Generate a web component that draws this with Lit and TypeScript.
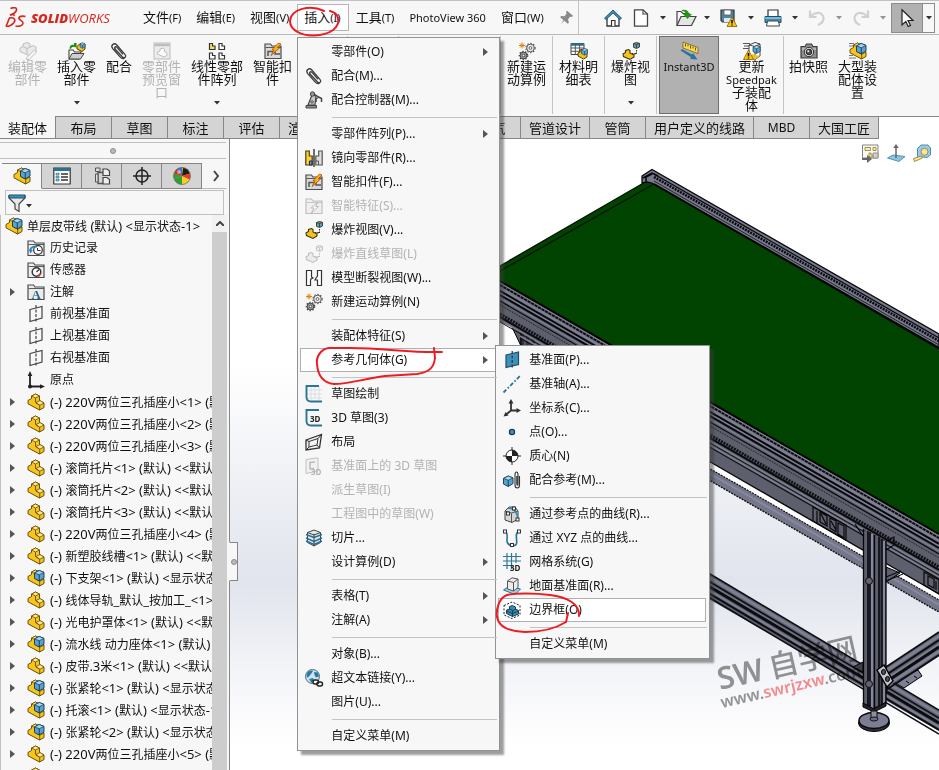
import { LitElement, html, svg, css, nothing, TemplateResult, SVGTemplateResult } from "lit";
import { customElement, state } from "lit/decorators.js";
import { classMap } from "lit/directives/class-map.js";

/* ---------- icon artwork, all on an 18 x 18 grid ---------- */

const partShape = svg`
  <path d="M1 7.5 4.5 5.5V3L8.5 1l4 2v4.5L17 10v4.5L12.500 17 1 10.800Z" fill="#f7c61c" stroke="#6a4c08"/>
  <path d="M4.500 3 8.500 1l4 2-4 2ZM9 9.500l4-2 4 2.500-4.300 2.300Z" fill="#fde58a" stroke="#6a4c08" stroke-width=".8"/>
  <path d="M8.500 5v4.500l4.200 2.800V17" fill="none" stroke="#6a4c08" stroke-width=".9"/>`;

const cube = (x: number, y: number, s: number) => svg`
  <g transform="translate(${x} ${y}) scale(${s})">
    <path d="M0 2.500 5 0l5 2V8L5 11 0 8.500Z" fill="#5aa3cd" stroke="#143c55"/>
    <path d="M0 2.500 5 0l5 2-5 2.500Z" fill="#a9d6ee" stroke="#143c55" stroke-width=".8"/>
    <path d="M5 4.500V11" stroke="#143c55"/>
  </g>`;

const asmShape = svg`${partShape}${cube(7.5, 1.5, 0.95)}`;

const clipShape = svg`<g fill="none" stroke="#3c3c3c" stroke-width="1.300" stroke-linecap="round">
  <path d="M5 7 12.500 15c2 1.800 4.300-.4 2.600-2.400L6.800 3C4 .2.200 3.300 2.700 6.600l7.600 8.500c1.300 1.400 3 1.600 4 1"/>
  <path d="M5 7C3.800 5.400 5.600 3.900 7 5.400l5.600 6.400"/></g>`;

const folderShape = (tone: string, fill: string) => svg`
  <path d="M1 16.500V2h5.500l1.500 2h9v12.500Z" fill="${fill}" stroke="${tone}" stroke-width="1.200"/>
  <path d="M1.500 5.500h15.500" stroke="${tone}" stroke-width=".9"/>`;

const planeOutline = svg`<path d="M3 4.500 15 1.500V13L3 16.500Z" fill="none" stroke="#444" stroke-width="1.200"/>
  <path d="M9 0v17.500" stroke="#444" stroke-width="1.200" stroke-dasharray="3 1.500"/>`;

const gear = (x: number, y: number, r: number, c: string, f: string) => svg`
  <circle cx=${x} cy=${y} r=${r + 0.8} fill="none" stroke=${c} stroke-width="1.200" stroke-dasharray="1.400 1.600"/>
  <circle cx=${x} cy=${y} r=${r} fill=${f} stroke=${c}/>
  <circle cx=${x} cy=${y} r=${r * 0.38} fill="#f7f7f7" stroke=${c} stroke-width=".9"/>`;

const explodeShape = (a: string, b: string, c: string) => svg`
  <path d="M1 12 3.500 10.500V8.500l3-1 1.500 1V11l4 2v2l-4 2.500-6.500-3Z" fill=${a} stroke=${c} stroke-width="1.100"/>
  <path d="M11.500 1.500l3-1 3 .8V5l-3 1.500-3-1.200Z" fill=${b} stroke=${c} stroke-width=".9"/>
  <path d="M11.500 1.500l3 1 3-1M14.500 2.500v3.500" stroke=${c} stroke-width=".8" fill="none"/>
  <path d="M14.500 8v4H11M10 11.500h4.500" stroke=${c} stroke-dasharray="1.500 1" fill="none"/>`;

const warn = svg`<path d="M5.500 8 10.500 17.500H.5Z" fill="#fbc50f" stroke="#8a5c00" stroke-width=".8"/><path d="M5.500 11v3.500M5.500 15.500v1" stroke="#111" stroke-width="1.600"/>`;
const speed = svg`<path d="M0 1.500h7M1 4h6M0 6.500h6" stroke="#555" stroke-width="1"/>`;

const ICONS: Record<string, SVGTemplateResult> = {
  part: partShape,
  asm: asmShape,
  clip: clipShape,
  editPart: svg`<g fill="#e9e9e9" stroke="#bdbdbd"><path d="M1 6 4 4.500V2l4-1.500L11 2v3l3-1.500 3 1.500v5l-6 4L1 9.500Z"/><path d="M4 4.500 8 6.500l3-1.500M8 6.500V12" fill="none"/><path d="M15.500 8 17.500 10 10 17.500 7.500 17.500 8 15.500Z" fill="#fafafa"/></g>`,
  insertPart: svg`<path d="M1 17V8h4l1.500 2H13l-2 7Z" fill="#fafafa" stroke="#444" stroke-width="1.100"/><path d="M1 17l3-5.500h12L12.500 17Z" fill="#cfcfcf" stroke="#444"/>
    <path d="M1.500 6.500C1.500 3 4 2 6 3V1l-.5 0h3v4.500L6.500 5C4.500 4.500 3.500 5 3 7Z" fill="#17920f"/>
    <path d="M9 4.500l3-3 5 .5v5L14 9.500 9 7Z" fill="#f3c21d" stroke="#4d3b0c"/>${cube(12, 0.8, 0.5)}`,
  preview: svg`<rect x="1" y="1" width="16" height="16" fill="#ececec" stroke="#bdbdbd"/><path d="M1.500 3h15" stroke="#bdbdbd" stroke-width="2.500"/><path d="M4.500 10 7 9V7l3-1 1.500 1v2.500L14 11v2.500L11 15l-6.500-3Z" fill="#fafafa" stroke="#bdbdbd"/>`,
  pattern: svg`<g stroke="#333" stroke-width="1.200"><path d="M1.500 1.500h3v2.500h2.500V7.500h-5.500Z" fill="#fbdf5b"/><path d="M11 1.500h3v2.500h2.500V7.500H11ZM1.500 11h3v2.500h2.500v3.500h-5.500ZM11 11h3v2.500h2.500v3.500H11Z" fill="#fff"/></g>`,
  fastener: svg`${folderShape("#4c4c4c", "#d9d9d9")}<path d="M4 14V9.500h7V12h5" fill="none" stroke="#555" stroke-width="1.500"/><path d="M14.500 1 17 2 13.500 5.500 15.500 6 7 13.500 10 8 8 7.500Z" fill="#fdae17" stroke="#a84c00" stroke-width=".8"/>`,
  feature: svg`${folderShape("#c0c0c0", "#efefef")}<path d="M13 5 6 11h3l-2.500 5L13.500 9.500H10.500Z" fill="#fff" stroke="#bbb"/>`,
  robot: svg`<path d="M3 14 7 4l4 1-1 9Z" fill="#c9c9c9" stroke="#444" stroke-width="1.200"/><path d="M1 14.500h10.500V17H1Z" fill="#8d8d8d" stroke="#444"/><circle cx="7.500" cy="3" r="2.200" fill="#999" stroke="#444"/><path d="M9 3l4.500 3M13.500 6 11 8v3M13.500 6l3 1.500V11" fill="none" stroke="#444" stroke-width="1.500"/><circle cx="7" cy="11" r="1.200" fill="#fff" stroke="#444"/>`,
  mirror: svg`<path d="M.8 2h3.500v5H7.200v9H.8Z" fill="#fbd23a" stroke="#4d3b0c" stroke-width="1.200"/><path d="M4.500 12h2.500v4H4.500Z" fill="#4fa3d1" stroke="#225"/><path d="M17.200 2h-3.500v5H10.800v9h6.400Z" fill="#ddd" stroke="#555" stroke-width="1.200"/><path d="M11 12h2.500v4" fill="none" stroke="#555"/><path d="M9 0v18" stroke="#111" stroke-width="1.200"/>`,
  explode: explodeShape("#f3c21d", "#4fa3d1", "#3d3314"),
  explodeOff: explodeShape("#ececec", "#ececec", "#c0c0c0"),
  breakView: svg`<g fill="#fff" stroke="#333" stroke-width="1.200"><path d="M1.500 1.500h5v6.500l1.500 1-2 1-.5 1v5.500h-4Z"/><path d="M16.500 1.500h-4V7L11 9l-1 2h2.500v5.500h4Z"/></g>`,
  motion: svg`${gear(12.5, 6, 3.8, "#555", "#f1f1f1")}${gear(5.500, 13.500, 3.4, "#444", "#9a9a9a")}<path d="M4 .5v6M1 3.500h6M2 1.500l4 4M6 1.500l-4 4" stroke="#d8860b"/>`,
  sketch: svg`<path d="M6 1v14M10 1v12M14 1v14M3 5h14M3 9h14M3 13h14" stroke="#d9dee2"/><path d="M14 1H1.500V12c0 3 1.500 4.500 4.500 4.500H17" fill="none" stroke="#2c7395" stroke-width="1.900"/>`,
  sketch3d: svg`<path d="M14 1H1.500V12c0 3 1.500 4.500 4.500 4.500H17" fill="none" stroke="#2c7395" stroke-width="1.900"/><text class="glyph" x="5" y="13" fill="#222">3D</text>`,
  layout: svg`<path d="M1 7 16.500 1.500 14.500 15 1 17Z" fill="#f4f4f4" stroke="#333" stroke-width="1.300"/><path d="M4 8.500 13 5.500l-1 6.500-8 2ZM1 7l3 1.500M16.500 1.500 13 5.500M1 17l3-3M14.500 15 12 12" fill="none" stroke="#333"/>`,
  planeSketch: svg`<path d="M1 2.500 13 .8V14L1 16.500Z" fill="#f1f1f1" stroke="#c0c0c0"/><path d="M10 5 5 5.500V12l4-.5" fill="none" stroke="#bbb" stroke-width="1.500"/><text class="glyph" x="6" y="17.500" fill="#b5b5b5">3D</text>`,
  slice: svg`<path d="M2.500 3.500 9 1l6.500 2.500v10L9 17 2.500 13.500Z" fill="#dfe7eb" stroke="#444"/><path d="M1 5.500 9 8.500l8-3M1 9l8 3.500L17 9M1 12l8 3.500 8-3.500" fill="none" stroke="#2a7194" stroke-width="1.500"/><path d="M9 5v12M2.500 3.500 9 6l6.500-2.500" fill="none" stroke="#444"/>`,
  link: svg`<circle cx="7.500" cy="7.500" r="7" fill="#cfe3ee" stroke="#4b6b7c"/><path d="M2 4c2-2.500 5-3 6-2l-2 3-3 3.500L1.500 8ZM9 3l4 .5 1 4-3 1L9.500 6ZM4 10l4-1 1 2-2.500 3Z" fill="#2b7aa3"/><rect x="8" y="11" width="5.500" height="4" rx="2" fill="#f7f7f7" stroke="#222" stroke-width="1.500"/><rect x="12" y="13" width="5.500" height="4" rx="2" fill="none" stroke="#222" stroke-width="1.500"/>`,
  plane: svg`<path d="M3 4 15.500 1v12.500L3 16.500Z" fill="#3f8fb9" stroke="#1c4f6b" stroke-width="1.200"/><path d="M9.200 0v17.500" stroke="#173c50" stroke-dasharray="3 1.500" stroke-width="1.200"/>`,
  axis: svg`<path d="M.5 17.500 17.500.5" stroke="#27749b" stroke-width="1.800" stroke-dasharray="4 2 1.500 2"/>`,
  coord: svg`<path d="M8 12V3M8 11.500l7 0M8 11.500 2.500 16" stroke="#333" stroke-width="1.800"/><path d="M8 0l2.500 4.500h-5ZM18 11.500l-4.500 2.500V9ZM.5 17.500 2.500 13l3 3.500Z" fill="#333"/>`,
  point: svg`<circle cx="9" cy="9" r="2.600" fill="#3f8fb9" stroke="#173c50" stroke-width="1.200"/>`,
  mass: svg`<path d="M9 0v18M0 9h18" stroke="#333"/><circle cx="9" cy="9" r="6" fill="#fff" stroke="#222"/><path d="M9 9V3a6 6 0 0 1 6 6ZM9 9v6A6 6 0 0 1 3 9Z" fill="#222"/>`,
  mateRef: svg`${cube(0.5, 5, 0.95)}<path d="M16.500 5v9c0 4-4.500 4-4.500 0V4c0-4 3-4 3 0v9c0 1.500-1.200 1.500-1.200 0V5" fill="none" stroke="#333" stroke-width="1.100"/>`,
  curveRef: svg`<path d="M2 6 6 2l6 0 3 4v8l-6 3.500L2 15Z" fill="#d5d5d5" stroke="#444"/><path d="M8.500 8v9M2 6l6.500 2L15 6" stroke="#555" fill="none"/><path d="M5 3c6 0 9 4 10 11" fill="none" stroke="#2a86b5" stroke-width="1.600"/><g fill="#fff" stroke="#333"><rect x="3.500" y="7" width="3" height="3"/><rect x="9.500" y="2" width="3" height="3"/><rect x="13" y="13" width="3" height="3"/></g>`,
  curveXyz: svg`<path d="M2 2.500C8 5-1 15 9 16.500S9 4 16 2.500" fill="none" stroke="#27749b" stroke-width="1.600"/><g fill="#fff" stroke="#333"><rect x=".5" y="1" width="3" height="3"/><rect x="14.500" y="1" width="3" height="3"/><rect x="7.500" y="14.500" width="3" height="3"/></g>`,
  grid: svg`<path d="M4 0v16M8.500 0v16M13 0v10M0 3.500h18M0 8h18M0 12.500h9" stroke="#2f7697" stroke-width="1.200"/><text class="glyph" x="7" y="18" fill="#222">3D</text>`,
  ground: svg`<path d="M.5 13 6 9.500l11.500 2.500L12 17.500Z" fill="#9fd0e8" stroke="#2a7194"/><path d="M4.500 4 9 .8l6 1.200v8.500L10.500 14 4.500 12Z" fill="#ececec" stroke="#555"/><path d="M4.500 4l6 1.500L15 2M10.500 5.500V14" fill="none" stroke="#555"/>`,
  bbox: svg`<path d="M1 4.500 9 1l8 3.500V14l-8 3.500L1 14Z" fill="none" stroke="#222" stroke-dasharray="2 1.500"/><path d="M3.500 9l3-1V5.500L9.500 4.500l3 1.500V8l3 1.500v3.500L9.500 15.500l-6-3Z" fill="#3c88ad" stroke="#153f56"/><path d="M6.500 8l3 1.500 3-1M9.500 9.500v6M3.500 10l6 2.500 6-2.500" stroke="#153f56" fill="none"/>`,
  table: svg`<path d="M1 1.500h13v11H1Z" fill="#fff" stroke="#444"/><path d="M1 2.500h13" stroke="#2a7194" stroke-width="2.500"/><path d="M5.300 2v10.500M9.600 2v10.500M1 6h13M1 9.300h13" stroke="#555"/><path d="M8 11l2-1V8l3-1 4 2v6l-3.500 2L8 14Z" fill="#f3c21d" stroke="#4d3b0c"/>${cube(11.5, 6.5, 0.6)}`,
  instant: svg`<path d="M3 0 18 5.500v6L3 6Z" fill="#fbdb5d" stroke="#7a6012" stroke-width=".8"/><path d="M5.500 1.500v3M8 2.500v2M10.500 3.500v3M13 4.500v2M15.500 5.500v3" stroke="#6b5409"/><path d="M.5 8.500 2 7 12 12.500l1-1.500L17.500 17.500 10 17l1-1.800Z" fill="#2c73a0"/>`,
  speedpak: svg`${speed}<path d="M6 3l6-2.500L17 2v12l-5 3.500L6 15Z" fill="#fff" stroke="#444"/><path d="M12 4v13M6 3l6 1.500L17 2" fill="none" stroke="#444"/>${cube(10, 3.5, 0.72)}<path d="M9 12l8 2-5 3.500-4-1.500Z" fill="#f3c21d"/>${warn}`,
  camera: svg`<path d="M1 4.500h4L6.500 2h5L13 4.500h4v11.500H1Z" fill="#8e8e8e" stroke="#3a3a3a" stroke-width="1.200"/><path d="M2 7h14" stroke="#ddd"/><circle cx="9" cy="10" r="4.700" fill="#ddd" stroke="#333"/><circle cx="9" cy="10" r="2.800" fill="#555" stroke="#222"/><circle cx="8.200" cy="9.200" r=".9" fill="#fff"/>`,
  largeAsm: svg`${asmShape}<path d="M0 1.500h5M0 4h4M0 13.500h4M0 16h7" stroke="#777"/>`,
  home: svg`<path d="M3 8.500V17h12V8.500" fill="#fff" stroke="#333" stroke-width="1.300"/><path d="M7.500 17v-5.500h3.500V17" fill="#fff" stroke="#333" stroke-width="1.200"/><path d="M9 1 .5 9.200 2 10.500 9 4l7 6.500 1.500-1.300Z" fill="#3f8fb9" stroke="#1c4f6b" stroke-width=".9"/>`,
  page: svg`<path d="M2.500.8h8.500L15.500 5v12.200h-13Z" fill="#fff" stroke="#444" stroke-width="1.300"/><path d="M11 .8V5h4.500" fill="none" stroke="#444" stroke-width="1.100"/>`,
  open: svg`<path d="M1 16.500V2.500h4L7 4.500h6v3" fill="#fafafa" stroke="#444" stroke-width="1.200"/><path d="M1 16.500 5 7.500h15L15.500 16.500Z" fill="#e4e4e4" stroke="#444" stroke-width="1.200"/><path d="M6 1c4-.8 6.500.5 7 4h3l-4.500 5L7 5h3C9.500 3 8 2 6 2Z" fill="#20990f"/>`,
  save: svg`<path d="M1 1h13v12H2.500L1 11.500Z" fill="#4f86a5" stroke="#333" stroke-width="1.200"/><path d="M4 1h7v5H4Z" fill="#fff" stroke="#555" stroke-width=".8"/><path d="M4 9h7v4H4Z" fill="#dfe9ef"/><g transform="translate(6.500 0)">${warn}</g>`,
  print: svg`<path d="M4 8V1h10v7" fill="#fff" stroke="#333" stroke-width="1.200"/><path d="M1 7.500h16v6H1Z" fill="#3f8fb9" stroke="#1c4f6b"/><path d="M1 9h16" stroke="#bfe0ef"/><path d="M3.500 12h11l1 5h-13Z" fill="#fff" stroke="#444"/>`,
  undo: svg`<path d="M2 1.500V8h6.500" fill="none" stroke="#a9a9a9" stroke-width="2.200"/><path d="M3 7c6-6 12-2.500 12.500 2 .2 3-2 5.500-5.500 7" fill="none" stroke="#a9a9a9" stroke-width="2.200"/>`,
  redo: svg`<path d="M16 1.500V8H9.500" fill="none" stroke="#a9a9a9" stroke-width="2.200"/><path d="M15 7C9 1 3 4.500 2.500 9c-.2 3 2 5.500 5.500 7" fill="none" stroke="#a9a9a9" stroke-width="2.200"/>`,
  cursor: svg`<path d="M4 .8 15 11.500h-5l2.500 5-2.300 1L7.800 12.500 4 16Z" fill="#fff" stroke="#222" stroke-width="1.200"/>`,
  pin: svg`<g transform="rotate(40 9 9)" fill="#8a8a8a"><path d="M4 1h10v2l-2 1.500v4L15.500 11v2h-13v-2L6 8.500v-4L4 3Z"/><path d="M8.200 12h1.600l-.8 7Z"/></g>`,
  props: svg`<path d="M.8 1h16.400v16H.8Z" fill="#fff" stroke="#333" stroke-width="1.200"/><path d="M1 2.500h16" stroke="#2a7194" stroke-width="3"/><path d="M8 7h7M8 10h7M8 13h7" stroke="#333" stroke-width="1.300"/><path d="M3 6.300h3v1.600H3ZM3 9.300h3v1.600H3ZM3 12.300h3v1.600H3Z" fill="#bfe0ef" stroke="#2a7194" stroke-width=".8"/>`,
  config: svg`<path d="M5 4v12.500h5M5 5.500h5" fill="none" stroke="#555" stroke-width="1.300"/><path d="M2.500 1h4.500v3.500H2.500ZM2.500 7h2.500v8H2.500Z" fill="#ddd" stroke="#555"/><path d="M10 2h4l2.500 2v4.500H10ZM10 10.500h4l2.500 2V17H10Z" fill="#eee" stroke="#444" stroke-width="1.200"/>`,
  target: svg`<circle cx="9" cy="9" r="6" fill="none" stroke="#222" stroke-width="1.500"/><path d="M9 0v18M0 9h18" stroke="#222" stroke-width="1.500"/>`,
  ball: svg`<circle cx="9" cy="9" r="8.500" fill="#f4d21f"/><path d="M9 9 1 11.500A8.500 8.500 0 0 1 1 6.500Z" fill="#2f9e3c"/><path d="M9 9V.5a8.500 8.500 0 0 0-8 6Z" fill="#d9272b"/><path d="M9 9 1 11.500a8.500 8.500 0 0 0 8 6Z" fill="#2f9e3c"/><path d="M9 9V.5a8.500 8.500 0 0 0-5 2Z" fill="#3a77c9"/><path d="M9 9 10 .5a8.500 8.500 0 0 1 7 6Z" fill="#1d1d1d"/><path d="M9 9l8-2.500a8.500 8.500 0 0 1-.5 6Z" fill="#e8392f"/><circle cx="6" cy="5" r="2" fill="#fff" opacity=".5"/><circle cx="9" cy="9" r="8.500" fill="none" stroke="#6a6a6a" stroke-width=".8"/>`,
  funnel: svg`<path d="M1 1.500h16v2.500L11 10v7.500L7 15v-5L1 4Z" fill="#e8e8e8" stroke="#444" stroke-width="1.200"/><path d="M1 1h16v3H1Z" fill="#3f8fb9" stroke="#1c4f6b"/>`,
  history: svg`${folderShape("#4c4c4c", "#ececec")}<circle cx="11" cy="11" r="4.300" fill="#fff" stroke="#333" stroke-width="1.200"/><path d="M10.500 9v2.500l3 0" fill="none" stroke="#333"/><path d="M3 11.500C4 7.500 8 7 10 8" fill="none" stroke="#2a86b5" stroke-width="1.800"/><path d="M5.800 11 3.500 14.500 1.800 10.500Z" fill="#2a86b5"/>`,
  sensor: svg`${folderShape("#4c4c4c", "#ececec")}<circle cx="9.500" cy="11" r="4.300" fill="#fff" stroke="#333" stroke-width="1.400"/><path d="M9.500 11l2.500-2.500" stroke="#333" stroke-width="1.300"/><path d="M12 12.500l2 0-1.500 3h-2.500Z" fill="#e03222"/>`,
  note: svg`${folderShape("#4c4c4c", "#ececec")}<text class="serif" x="4.500" y="15.500" fill="#24688c">A</text>`,
  datum: planeOutline,
  origin: svg`<path d="M3 16V4M3 15.500h11" stroke="#222" stroke-width="1.800"/><path d="M3 0l2.300 5H.7ZM18 15.500l-5 2.300v-4.600Z" fill="#222"/><circle cx="3" cy="15.500" r="2" fill="#222"/>`,
  viewSet: svg`<path d="M1.500 1h15.500v13H1.500Z" fill="#f8f8f8" stroke="#777"/><path d="M4 3.500h5.500v3H4ZM12 3.500h3v3h-3Z" fill="#fbf0b0" stroke="#9a8433"/><path d="M12 9h5v5h-5Z" fill="#ccc" stroke="#888"/><path d="M8 9h2v2h2v2H8Z" fill="#fbe38b" stroke="#9a8433"/><path d="M1 14h5v-3l5 4-5 4v-3H1Z" fill="#555"/>`,
  normalTo: svg`<path d="M.5 14 6 11l12 1.500L12 17.500Z" fill="#7fbfe0" stroke="#2a7194" stroke-width=".8"/><path d="M9 14V3" stroke="#555" stroke-width="1.500"/><path d="M9 0l2.800 4H6.200Z" fill="#555"/>`,
  measure: svg`<path d="M4.500 12.500V4.500L8 1h7l2.500 3v7L14 13.500Z" fill="#8fc6e2" stroke="#3f7f9d"/><circle cx="11.500" cy="7.800" r="3.500" fill="#f7e391" stroke="#96803a"/><path d="M.5 14.500 8 12l1.500 2L1.500 17.500Z" fill="#f7e391" stroke="#96803a"/>`,
};

const icon = (name?: string) =>
  html`<svg class="icon" viewBox="0 0 18 18" aria-hidden="true">${name ? ICONS[name] : nothing}</svg>`;
const caret = html`<svg class="caret" viewBox="0 0 6 4" aria-hidden="true"><path d="M0 0h6L3 3.500Z" /></svg>`;
const triangle = html`<svg class="triangle" viewBox="0 0 5 8" aria-hidden="true"><path d="M0 0 5 4 0 8Z" /></svg>`;

/* ---------- data ---------- */

interface MenuEntry {
  label?: string;
  icon?: string;
  more?: boolean;
  off?: boolean;
  hot?: boolean;
  children?: MenuEntry[];
}
const RULE: MenuEntry = {};

const GEOMETRY_MENU: MenuEntry[] = [
  { label: "基准面(P)...", icon: "plane" },
  { label: "基准轴(A)...", icon: "axis" },
  { label: "坐标系(C)...", icon: "coord" },
  { label: "点(O)...", icon: "point" },
  { label: "质心(N)", icon: "mass" },
  { label: "配合参考(M)...", icon: "mateRef" },
  RULE,
  { label: "通过参考点的曲线(R)...", icon: "curveRef" },
  { label: "通过 XYZ 点的曲线...", icon: "curveXyz" },
  { label: "网格系统(G)", icon: "grid" },
  { label: "地面基准面(R)...", icon: "ground" },
  { label: "边界框(O)", icon: "bbox", hot: true },
  RULE,
  { label: "自定义菜单(M)" },
];

const INSERT_MENU: MenuEntry[] = [
  { label: "零部件(O)", more: true },
  { label: "配合(M)...", icon: "clip" },
  { label: "配合控制器(M)...", icon: "robot" },
  RULE,
  { label: "零部件阵列(P)...", more: true },
  { label: "镜向零部件(R)...", icon: "mirror" },
  { label: "智能扣件(F)...", icon: "fastener" },
  { label: "智能特征(S)...", icon: "feature", off: true },
  { label: "爆炸视图(V)...", icon: "explode" },
  { label: "爆炸直线草图(L)", icon: "explodeOff", off: true },
  { label: "模型断裂视图(W)...", icon: "breakView" },
  { label: "新建运动算例(N)", icon: "motion" },
  RULE,
  { label: "装配体特征(S)", more: true },
  { label: "参考几何体(G)", more: true, hot: true, children: GEOMETRY_MENU },
  RULE,
  { label: "草图绘制", icon: "sketch" },
  { label: "3D 草图(3)", icon: "sketch3d" },
  { label: "布局", icon: "layout" },
  { label: "基准面上的 3D 草图", icon: "planeSketch", off: true },
  { label: "派生草图(I)", off: true },
  { label: "工程图中的草图(W)", off: true },
  { label: "切片...", icon: "slice" },
  { label: "设计算例(D)", more: true },
  RULE,
  { label: "表格(T)", more: true },
  { label: "注解(A)", more: true },
  RULE,
  { label: "对象(B)..." },
  { label: "超文本链接(Y)...", icon: "link" },
  { label: "图片(U)..." },
  RULE,
  { label: "自定义菜单(M)" },
];

interface Tool {
  lines: string[];
  icon: string;
  size: string;
  off?: boolean;
  drop?: boolean;
  on?: boolean;
}
const TOOLS_LEFT: Tool[] = [
  { lines: ["编辑零", "部件"], icon: "editPart", size: "mid", off: true },
  { lines: ["插入零", "部件"], icon: "insertPart", size: "mid", drop: true },
  { lines: ["配合"], icon: "clip", size: "small" },
  { lines: ["零部件", "预览窗", "口"], icon: "preview", size: "mid", off: true },
  { lines: ["线性零部", "件阵列"], icon: "pattern", size: "large", drop: true },
  { lines: ["智能扣", "件"], icon: "fastener", size: "mid" },
];
const TOOLS_RIGHT: Tool[] = [
  { lines: ["新建运", "动算例"], icon: "motion", size: "ruled" },
  { lines: ["材料明", "细表"], icon: "table", size: "ruled" },
  { lines: ["爆炸视", "图"], icon: "explode", size: "ruled", drop: true },
  { lines: ["Instant3D"], icon: "instant", size: "", on: true },
  { lines: ["更新", "Speedpak", "子装配", "体"], icon: "speedpak", size: "ruled big" },
  { lines: ["拍快照"], icon: "camera", size: "mid" },
  { lines: ["大型装", "配体设", "置"], icon: "largeAsm", size: "mid" },
];

const TABS = ["装配体", "布局", "草图", "标注", "评估", "渲染工具", "SOLIDWORKS 插件", "电气", "管道设计", "管筒", "用户定义的线路", "MBD", "大国工匠"];

const TREE: [string, string, boolean][] = [
  ["history", "历史记录", false],
  ["sensor", "传感器", false],
  ["note", "注解", true],
  ["datum", "前视基准面", false],
  ["datum", "上视基准面", false],
  ["datum", "右视基准面", false],
  ["origin", "原点", false],
  ["part", "(-) 220V两位三孔插座小<1> (默认) <<默认>", true],
  ["part", "(-) 220V两位三孔插座小<2> (默认) <<默认>", true],
  ["part", "(-) 220V两位三孔插座小<3> (默认) <<默认>", true],
  ["part", "(-) 滚筒托片<1> (默认) <<默认>", true],
  ["part", "(-) 滚筒托片<2> (默认) <<默认>", true],
  ["part", "(-) 滚筒托片<3> (默认) <<默认>", true],
  ["part", "(-) 220V两位三孔插座小<4> (默认) <<默认>", true],
  ["part", "(-) 新塑胶线槽<1> (默认) <<默认>", true],
  ["asm", "(-) 下支架<1> (默认) <显示状态-1>", true],
  ["part", "(-) 线体导轨_默认_按加工_<1> (默认)", true],
  ["part", "(-) 光电护罩体<1> (默认) <<默认>", true],
  ["asm", "(-) 流水线 动力座体<1> (默认) <显示状态-1>", true],
  ["part", "(-) 皮带.3米<1> (默认) <<默认>", true],
  ["asm", "(-) 张紧轮<1> (默认) <显示状态-1>", true],
  ["asm", "(-) 托滚<1> (默认) <显示状态-1>", true],
  ["asm", "(-) 张紧轮<2> (默认) <显示状态-1>", true],
  ["part", "(-) 220V两位三孔插座小<5> (默认) <<默认>", true],
  ["part", "(-) 220V两位三孔插座小<6> (默认) <<默认>", true],
];

/** Sets the Latin runs of a tree label one size larger than the Chinese ones. */
const mixed = (text: string) =>
  text.split(/([\x20-\x7e]+)/).map((run) => (/^[\x20-\x7e]+$/.test(run) ? html`<span class="latin">${run}</span>` : run));

/* ---------- model in the graphics area ---------- */

const SLATE = "#5d606c";
const LAV = "#7d7f92";

/** Lines parallel to a base edge: [vertical offset, width, colour, dash]. */
type Stripe = [number, number, string, string?];
const stripes = (x1: number, y1: number, x2: number, y2: number, list: Stripe[]) =>
  list.map(([o, w, c, d]) => svg`<line x1=${x1} y1=${y1 + o} x2=${x2} y2=${y2 + o} stroke=${c} stroke-width=${w} stroke-dasharray=${d ?? "none"}/>`);

const MODEL = svg`
  <path d="M700 456 939 594V601L700 463Z" fill="#fdfdfe"/>
  <path d="M700 463 939 600V612L700 475Z" fill="#74768a"/>
  ${stripes(700, 463, 939, 600, [[0, 1.2, "#111", "2 1"], [5, 2, "#8789a0"], [12, 1.4, "#111", "2 1"]])}

  <path d="M700 568 939 710V731L700 594Z" fill=${SLATE}/>
  ${stripes(700, 568, 939, 710, [[0, 1.5, "#0c0c10"], [4, 3, LAV], [8, 1.5, "#0c0c10"], [11, 1.5, LAV], [13, 3, "#0c0c10"], [17, 2, LAV], [20, 2, "#0c0c10"], [24, 1.5, "#0c0c10"]])}

  <path d="M894 682 918 670 922 676 904 688Z" fill=${LAV} stroke="#000"/>
  <path d="M884 668 939 632V656L892 684Z" fill=${SLATE}/>
  ${stripes(886, 667, 939, 632, [[0, 1.5, "#0c0c10"], [4, 3, LAV], [8, 2, "#0c0c10"], [12, 2, LAV], [15, 3, "#0c0c10"], [19, 3, LAV], [23, 2, "#0c0c10"]])}

  <path d="M500 281 939 534V594L700 456 600 402 532 368V345L521 345 512 327 500 322Z" fill=${SLATE}/>
  <path d="M512 327 521 333V346Z" fill=${SLATE} stroke="#000"/>
  <path d="M521 333 534 340V347H521Z" fill="#33353d" stroke="#000"/>
  <path d="M525 335V347M530 338V347" stroke="#7d7f92"/>
  ${stripes(500, 281, 939, 534, [
    [0, 2, "#060608"], [2, 1.3, LAV], [4, 1.8, "#08080a", "3 1"], [7, 2.500, LAV], [10, 2, "#08080a"], [12, 1.5, LAV], [14, 1.800, "#08080a"],
    [17, 1.500, LAV], [20, 1.2, "#08080a"], [24, 1, "#111", "1 1"], [33, 3, "#101015", "2 1"], [36, 2, "#0a0a0c"], [39, 1.5, LAV], [41, 1, "#111"],
  ])}
  ${stripes(520, 293, 939, 534, [[43, 1.5, LAV], [45, 1.2, "#111"]])}
  ${stripes(700, 456, 939, 594, [[0, 1.4, "#08080a"]])}

  <g fill="none" stroke="#08080a" stroke-width="1.200">
    <path d="M813 507 846 525V540L813 521ZM817 511V523M820 512l7 4v10l-7-4ZM830 518l6 3v11l-6-4ZM838 523l6 3v12l-6-4ZM821 514l5 10M831 521l5 9"/>
    <path d="M924 572 939 580V594L924 585ZM928 576l6 3v9l-6-3ZM936 581v9"/>
    <path d="M855 524 863 536M886 541l8-4v8l-8 5"/>
  </g>
  <path d="M886 567 900 573 886 582Z" fill=${SLATE} stroke="#000"/>
  <path d="M886 577 901 571M886 581 903 574" stroke="#000"/>

  <path d="M500 266 647 181 652 183 939 349V534L500 281Z" fill="#014401"/>
  <path d="M500 266 647 181M500 271 654 184" stroke="#041404" stroke-width="1.400"/>
  <path d="M500 281 939 534" stroke="#050505" stroke-width="1.800"/>

  <path d="M642 176 652 169.500 939 334V349L652 183 647 182 642 183Z" fill="#77798d" stroke="#08080a" stroke-width="1.300"/>
  ${stripes(654, 170, 939, 334, [[4, 1.2, "#08080a"], [7, 2.600, "#0b0b0e", "2 1"], [11, 1, "#25262c"], [14, 2, "#050506"]])}
  <path d="M643 178 652 173 658 176M646 182V177l6-3" fill="none" stroke="#08080a" stroke-width="1.500"/>

  <path d="M863 529 886 541V703L874 710 863 704Z" fill="#3d3f48"/>
  <path d="M865.500 531V704M876.500 536V706" stroke=${SLATE} stroke-width="3"/>
  <path d="M872 534V708M884 541V703" stroke="#8688a0" stroke-width="2.500"/>
  <path d="M863.500 529V704M868 531V706M870 532V706M874.500 535V709M879 537V706M882 539V704M886 541V703" stroke="#060608" stroke-width="1.300"/>
  <path d="M863 703 874 709 886 702V706L874 712 863 707Z" fill="#24252b" stroke="#000"/>
  <circle cx="869" cy="581" r="3.500" fill="#62646f" stroke="#111"/>
  <circle cx="869" cy="684" r="3.500" fill="#62646f" stroke="#111"/>
  <path d="M877 670 884 665 893 681 887 687Z" fill="#c4c5cd" stroke="#000" stroke-width="1.400"/>
  <ellipse cx="883.500" cy="672" rx="2" ry="2.600" fill="#4e505a" stroke="#000"/>
  <ellipse cx="887.500" cy="679" rx="2" ry="2.600" fill="#4e505a" stroke="#000"/>
  <path d="M853 667 863 662V672ZM906 681l3 2M914 676l3 2" fill="#3d3f48" stroke="#000"/>

  <ellipse cx="874" cy="723" rx="15.500" ry="8.500" fill="#2d2e34" stroke="#000"/>
  <ellipse cx="874" cy="720.500" rx="15" ry="8" fill="#7b7d92" stroke="#08080a" stroke-width="1.500"/>
  <path d="M871 711H877V719H871Z" fill="#8c8ea3" stroke="#111"/>
  <ellipse cx="874" cy="719" rx="4" ry="2" fill="#6c6e82" stroke="#111"/>

  <g class="watermark" transform="rotate(-13 720 690)">
    <text class="mark-big" x="720" y="690">SW<tspan class="mark-cjk" dx="6">自学网</tspan></text>
    <text class="mark-small" x="718" y="708">www.<tspan class="mark-red">swrjzxw</tspan>.com</text>
  </g>`;

@customElement("app-root")
export class AppRoot extends LitElement {
  @state() private tab = "装配体";
  @state() private open = true;

  static styles = css`
    :host {
      display: flex;
      flex-direction: column;
      height: 100vh;
      overflow: hidden;
      position: relative;
      background: #fff;
      color: #111;
      font: 12px/16px "Noto Sans", "Noto Sans CJK SC", sans-serif;
    }
    * { box-sizing: border-box; }
    button, input {
      font: inherit;
      color: inherit;
      background: none;
      border: 0;
      margin: 0;
      padding: 0;
    }
    ul { list-style: none; margin: 0; padding: 0; }
    .icon { width: 18px; height: 18px; flex: none; display: block; overflow: visible; }
    .caret { width: 6px; height: 4px; display: block; fill: #333; }
    .triangle { width: 5px; height: 8px; display: block; fill: #555; }
    .glyph { font: bold 8px "Noto Sans", sans-serif; }
    .serif { font: bold 13px "Liberation Serif", serif; }

    /* title bar */
    .top {
      display: flex;
      align-items: center;
      height: 35px;
      flex: none;
      background: #f7f7f7;
      border-top: 1px solid #c2c2c2;
      border-bottom: 1px solid #b9b9b9;
      position: relative;
      z-index: 2;
    }
    .brand { display: flex; align-items: center; width: 135px; padding-left: 5px; gap: 4px; color: #d7261e; flex: none; }
    .ds { width: 22px; height: 22px; flex: none; }
    .name { font: italic 13px/16px "Open Sans", sans-serif; }
    .name b { font-weight: 800; }
    .bar { display: flex; align-items: center; }
    .bar li { position: relative; }
    .head { height: 27px; padding: 0 8px 0 7px; white-space: nowrap; font-size: 13px; display: block; }
    .bar li:first-child .head { padding-left: 8px; }
    .head small { font-size: 11px; }
    .hot-head { background: #fff; outline: 1px solid #b5b5b5; outline-offset: -1px; }
    .pin { padding-left: 7px; padding-right: 5px; height: 33px; display: flex; align-items: center; border-right: 1px solid #c4c4c4; }
    .pin .icon { width: 14px; height: 14px; }
    .quick { display: flex; align-items: center; margin-left: auto; margin-right: 4px; }
    .quick button { display: flex; align-items: center; justify-content: center; height: 24px; width: 28px; }
    .quick .drop { width: 16px; }
    .faded { opacity: 0.5; }
    .select { display: flex; height: 30px; border: 1px solid #8c8c8c; }
    .quick .select button { height: 28px; width: 30px; background: #b1b1b1; }
    .quick .select .drop { width: 12px; background: #f7f7f7; border-left: 1px solid #8c8c8c; }

    /* drop-down menus */
    .menu {
      position: absolute;
      background: #f7f7f7;
      border: 1px solid #929292;
      box-shadow: 4px 4px 2px rgba(60, 60, 60, 0.5);
      padding: 2px 0;
    }
    .drop-menu { top: 33px; left: 0; width: 203px; }
    .sub-menu { top: -3px; left: 197px; width: 215px; }
    .menu li { position: relative; }
    .entry {
      display: flex;
      align-items: center;
      gap: 8px;
      width: calc(100% - 5px);
      height: 24px;
      margin-left: 2px;
      padding: 0 7px 0 5px;
      border: 1px solid transparent;
      border-left-width: 0;
      text-align: left;
      white-space: nowrap;
    }
    .entry .triangle { margin-left: auto; }
    .off { color: #b3b3b3; }
    .hot { background: #fff; border: 1px solid #b0b0b0; padding-left: 4px; }
    .rule { height: 10px; padding: 5px 2px 0 34px; }
    .rule::after { content: ""; display: block; height: 1px; background: #c3c3c3; }

    /* ribbon */
    .ribbon { display: flex; flex: none; height: 81px; background: #f7f7f7; padding: 1px 0 0 3px; }
    .tool {
      display: flex;
      flex-direction: column;
      align-items: center;
      position: relative;
      flex: none;
      height: 78px;
      padding-top: 6px;
      font-size: 13px;
      line-height: 13px;
      text-align: center;
      white-space: nowrap;
    }
    .tool .line { display: block; }
    .tool .latin-line { font-size: 11px; padding-top: 1px; line-height: 12px; }
    .tool .caret { position: absolute; bottom: 9px; left: calc(50% - 3px); }
    .small { width: 36px; }
    .mid { width: 49px; }
    .large { width: 62px; }
    .ruled { width: 52px; border-right: 1px solid #c4c4c4; }
    .big { width: 64px; }
    .on { width: 60px; margin: 0 1px 0 2px; background: #b1b1b1; border: 1px solid #6e6e6e; padding-top: 5px; }
    .group { display: flex; height: 78px; flex: none; width: 204px; border-right: 1px solid #c4c4c4; }
    .group span { width: 51px; border-right: 1px solid #c4c4c4; }

    /* command tabs */
    .tabs { display: flex; flex: none; height: 23px; background: #fff; }
    .tabs button {
      min-width: 56px;
      padding: 0 8px;
      font-size: 13px;
      line-height: 20px;
      white-space: nowrap;
      overflow: hidden;
      background: #d4d4d4;
      border: 1px solid #868686;
      border-right-width: 0;
      flex: none;
    }
    .tabs .plug { width: 116px; }
    .tabs .latin-tab { font-size: 12px; }
    .tabs .current { background: #f7f7f7; border-top-color: #f7f7f7; border-left-width: 0; min-width: 55px; }
    .tabs .rest { flex: 1; border-top: 1px solid #868686; position: relative; }
    .tabs .rest::before { content: ""; display: block; width: 1px; height: 22px; background: #868686; }

    /* feature manager */
    .work { display: flex; flex: 1; min-height: 0; }
    .panel { display: flex; flex-direction: column; width: 230px; flex: none; background: #f7f7f7; border-right: 1px solid #868686; position: relative; }
    .grip { height: 17px; margin: 3px 3px 4px 0; flex: none; border: solid #c0c0c0; border-width: 1px 0; display: grid; place-items: center; }
    .dot { width: 6px; height: 6px; border-radius: 50%; background: #bbb; border: 1px solid #8a8a8a; }
    .views { display: flex; flex: none; height: 26px; padding-left: 2px; }
    .views button { width: 40px; display: grid; place-items: center; background: #d4d4d4; border: 1px solid #868686; border-left-width: 0; }
    .views .current { background: #f7f7f7; border-bottom-color: #f7f7f7; }
    .views .next { flex: 1; width: auto; padding-left: 3px; margin-right: 2px; background: none; border-color: transparent transparent #b9b9b9; }
    .next svg { width: 6px; height: 12px; fill: none; stroke: #444; stroke-width: 2; }
    .filter { display: flex; align-items: center; flex: none; height: 25px; margin: 1px 5px 0 5px; border: 1px solid #c0c0c0; padding-left: 2px; }
    .filter button { display: flex; align-items: center; gap: 0; }
    .filter .caret { margin-top: 6px; }
    .filter input { flex: 1; min-width: 0; outline: 0; }
    .browse { display: flex; flex: 1; min-height: 0; border-left: 1px solid #c0c0c0; margin-right: 2px; }
    .tree { flex: 1; min-width: 0; overflow: hidden; }
    .node { display: flex; align-items: center; height: 22px; padding-left: 9px; gap: 5px; white-space: nowrap; }
    .node .twist { width: 12px; flex: none; }
    .root { padding-left: 4px; gap: 4px; }
    .latin { font-size: 13px; white-space: pre; }
    .scroll { width: 15px; flex: none; background: #cdcdcd; }
    .scroll button { width: 15px; height: 17px; background: #f1f1f1; display: grid; place-items: center; }
    .scroll svg { width: 8px; height: 5px; fill: none; stroke: #444; stroke-width: 2; }
    .handle { position: absolute; left: 229px; top: 403px; width: 9px; height: 39px; background: #f7f7f7; border: 1px solid #868686; border-left-color: #f7f7f7; display: grid; place-items: center; z-index: 1; }

    /* graphics area */
    .stage {
      flex: 1;
      min-width: 0;
      position: relative;
      overflow: hidden;
      background: linear-gradient(#fff 0%, #fff 36%, #e1e4ed 70%, #f3f4f8 84%, #fff 96%);
    }
    .model { position: absolute; inset: 0; width: 100%; height: 100%; }
    .head-up { position: absolute; top: 5px; right: 8px; display: flex; gap: 8px; opacity: 0.9; }
    .watermark { mix-blend-mode: multiply; fill: #979797; }
    .mark-big { font: 600 31px "Noto Sans", sans-serif; }
    .mark-cjk { font: 500 30px "Noto Sans CJK SC", sans-serif; }
    .mark-small { font: 600 16px "Noto Sans", sans-serif; }
    .mark-red { fill: #fa9090; }

    /* hand-drawn marks */
    .ink { position: absolute; left: 0; top: 0; width: 939px; height: 770px; z-index: 3; pointer-events: none; fill: none; stroke: #ed1c24; stroke-width: 2; stroke-linecap: round; }
  `;

  private menu(entries: MenuEntry[], kind: string): TemplateResult {
    return html`<ul class="menu ${kind}" role="menu">
      ${entries.map((e) =>
        e.label
          ? html`<li role="none">
              <button role="menuitem" class=${classMap({ entry: true, off: !!e.off, hot: !!e.hot })} ?disabled=${e.off}>
                ${icon(e.icon)}<span>${e.label}</span>${e.more ? triangle : nothing}
              </button>
              ${e.children ? this.menu(e.children, "sub-menu") : nothing}
            </li>`
          : html`<li class="rule" role="separator"></li>`
      )}
    </ul>`;
  }

  private head(text: string, key: string) {
    return html`<li><button class="head">${text}<small>${key}</small></button></li>`;
  }

  private quickTool(name: string, label: string, faded = false) {
    return html`<button class=${classMap({ faded })} aria-label=${label}>${icon(name)}</button
      ><button class=${classMap({ drop: true, faded })} aria-label="${label}选项">${caret}</button>`;
  }

  private tool(t: Tool) {
    return html`<button class="tool ${t.size} ${t.off ? "off" : ""} ${t.on ? "on" : ""}">
      ${icon(t.icon)}
      <span class="label">${t.lines.map((l) => html`<span class="line ${/^\w+$/.test(l) ? "latin-line" : ""}">${l}</span>`)}</span>
      ${t.drop ? caret : nothing}
    </button>`;
  }

  render() {
    return html`
      <header class="top">
        <div class="brand">
          <svg class="ds" viewBox="0 0 22 22" aria-hidden="true">
            <g fill="none" stroke="#d7261e" stroke-width="1.600">
              <path d="M5.500 1.500C9 0 12 .5 11.500 3 11 5.500 8 7 5 8" />
              <path d="M5 8C8 7 9.500 7.500 9 9" />
              <path d="M1 19.500 4.500 11C9 10 11 12.500 9 15.500 7 18 4 19.500 1 19.500" />
              <path d="M20.500 9.500C17 8.500 13.500 9.500 14 11.500 14.500 13.500 18.500 13.500 18 16.500 17.500 19 13.500 19.500 10.500 19" />
            </g>
          </svg>
          <span class="name"><b>SOLID</b>WORKS</span>
        </div>
        <ul class="bar">
          ${this.head("文件", "(F)")}${this.head("编辑", "(E)")}${this.head("视图", "(V)")}
          <li>
            <button class="head hot-head" aria-haspopup="menu" @click=${() => (this.open = !this.open)}>插入<small>(I)</small></button>
            ${this.open ? this.menu(INSERT_MENU, "drop-menu") : nothing}
          </li>
          ${this.head("工具", "(T)")}${this.head("", "PhotoView 360")}${this.head("窗口", "(W)")}
        </ul>
        <button class="pin" aria-label="固定菜单">${icon("pin")}</button>
        <div class="quick">
          <button aria-label="主页">${icon("home")}</button>
          ${this.quickTool("page", "新建")}${this.quickTool("open", "打开")}${this.quickTool("save", "保存")}
          ${this.quickTool("print", "打印")}${this.quickTool("undo", "撤消", true)}${this.quickTool("redo", "重做", true)}
          <div class="select"><button aria-label="选择">${icon("cursor")}</button><button class="drop" aria-label="选择选项">${caret}</button></div>
        </div>
      </header>

      <section class="ribbon">
        ${TOOLS_LEFT.map((t) => this.tool(t))}
        <div class="group"><span></span><span></span></div>
        ${TOOLS_RIGHT.map((t) => this.tool(t))}
      </section>

      <nav class="tabs">
        ${TABS.map(
          (t) => html`<button
            class=${classMap({ current: t === this.tab, plug: t.startsWith("SOLID"), "latin-tab": t === "MBD" })}
            @click=${() => (this.tab = t)}
          >${t}</button>`
        )}
        <span class="rest"></span>
      </nav>

      <main class="work">
        <aside class="panel">
          <div class="grip"><span class="dot"></span></div>
          <div class="views">
            <button class="current" aria-label="设计树">${icon("asm")}</button>
            <button aria-label="属性">${icon("props")}</button>
            <button aria-label="配置">${icon("config")}</button>
            <button aria-label="尺寸">${icon("target")}</button>
            <button aria-label="外观">${icon("ball")}</button>
            <button class="next" aria-label="更多"><svg viewBox="0 0 6 12"><path d="M1 1 5 6 1 11" /></svg></button>
          </div>
          <div class="filter">
            <button aria-label="过滤选项">${icon("funnel")}${caret}</button>
            <input type="text" aria-label="过滤" />
          </div>
          <div class="browse">
            <ul class="tree">
              <li class="node root">${icon("asm")}<span>${mixed("单层皮带线 (默认) <显示状态-1>")}</span></li>
              ${TREE.map(
                ([name, label, more]) => html`<li class="node">
                  <span class="twist">${more ? triangle : nothing}</span>${icon(name)}<span>${mixed(label)}</span>
                </li>`
              )}
            </ul>
            <div class="scroll"><button aria-label="向上滚动"><svg viewBox="0 0 8 5"><path d="M0 5 4 1l4 4" /></svg></button></div>
          </div>
          <button class="handle" aria-label="折叠面板"><span class="dot"></span></button>
        </aside>
        <section class="stage">
          <svg class="model" viewBox="230 139 709 631" preserveAspectRatio="xMinYMin slice" role="img" aria-label="单层皮带线">${MODEL}</svg>
          <div class="head-up">
            <button aria-label="视图设定">${icon("viewSet")}</button>
            <button aria-label="正视于">${icon("normalTo")}</button>
            <button aria-label="测量">${icon("measure")}</button>
          </div>
        </section>
      </main>

      <svg class="ink" viewBox="0 0 939 770" aria-hidden="true">
        <path d="M324 11C310 4 291 9 290 21 290 31 303 36 314 35.500 330 35 340 28 338 18 337 14 334 12 330 11" />
        <path d="M442 352C410 353 385 348 350 348H329C320 349 316 358 317 364 318 378 325 383 334 384 350 384 362 379 385 376L417 374C430 372 434 367 435 358L434 348" />
        <path d="M579 616C580 604 567 597 550 595 535 593 515 593 507 595 499 598 496 609 497 617 499 627 508 631 525 632 545 632 558 627 566 622L568 613" />
      </svg>
    `;
  }
}
